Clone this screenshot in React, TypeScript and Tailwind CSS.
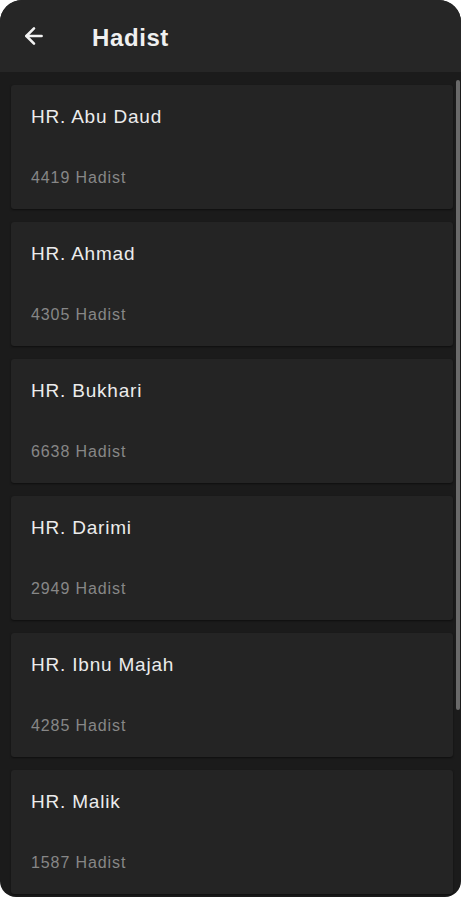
import { ArrowLeft } from "lucide-react";

const books = [
  { name: "HR. Abu Daud", count: 4419 },
  { name: "HR. Ahmad", count: 4305 },
  { name: "HR. Bukhari", count: 6638 },
  { name: "HR. Darimi", count: 2949 },
  { name: "HR. Ibnu Majah", count: 4285 },
  { name: "HR. Malik", count: 1587 },
];

export default function App() {
  return (
    <div className="h-[900px] w-[461px] bg-white font-['Liberation_Sans',Arial,sans-serif]">
      <div className="relative h-[897px] overflow-hidden rounded-t-[22px] rounded-b-[16px] bg-[#1b1b1b]">
        <header className="flex h-[72px] items-center bg-[#262626] pl-[21px]">
          <ArrowLeft className="h-[26px] w-[26px] text-[#f2f2f2]" strokeWidth={2.4} />
          <h1 className="ml-[45px] pt-[4px] text-[24px] font-bold tracking-[0.6px] text-[#f0f0f0]">Hadist</h1>
        </header>

        <div className="flex flex-col gap-[13px] pl-[11px] pr-[8px] pt-[13px]">
          {books.map((b) => (
            <div
              key={b.name}
              className="flex h-[124px] flex-col justify-between rounded-[3px] bg-[#242424] pb-[21px] pl-[20px] pt-[18px] shadow-[0_1px_2px_rgba(0,0,0,0.5)]"
            >
              <p className="text-[19px] leading-[28px] tracking-[0.8px] text-[#ececec]">{b.name}</p>
              <p className="text-[16px] leading-[20px] tracking-[0.9px] text-[#878787]">{b.count} Hadist</p>
            </div>
          ))}
        </div>

        <div className="absolute right-[1px] top-[80px] h-[630px] w-[4px] rounded-full bg-[#6a6a6a]" />
      </div>
    </div>
  );
}
